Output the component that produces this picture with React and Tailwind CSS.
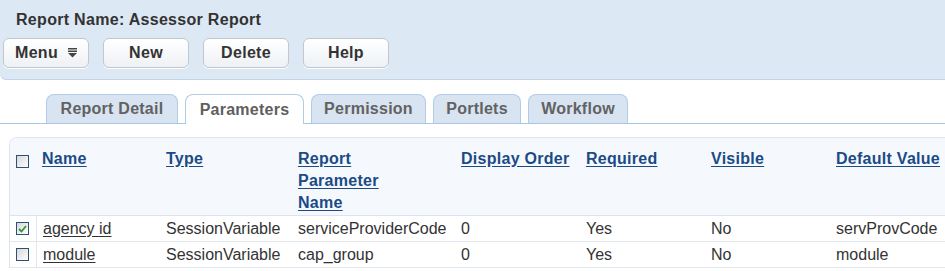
import React from "react";

const tabs = [
    { label: "Report Detail", w: "w-[132px]" },
    { label: "Parameters", w: "w-[119px]", active: true },
    { label: "Permission", w: "w-[115px]" },
    { label: "Portlets", w: "w-[88px]" },
    { label: "Workflow", w: "w-[100px]" },
];

const rows = [
    { name: "agency id", type: "SessionVariable", param: "serviceProviderCode", order: "0", required: "Yes", visible: "No", def: "servProvCode", checked: true },
    { name: "module", type: "SessionVariable", param: "cap_group", order: "0", required: "Yes", visible: "No", def: "module", checked: false },
];

const cols = "grid grid-cols-[26px_124px_132px_163px_125px_125px_125px_1fr]";

function Checkbox({ checked }) {
    return (
        <span className="inline-flex items-center justify-center w-[13px] h-[13px] border border-[#2d4f78] bg-gradient-to-br from-[#d8d8d8] to-white">
            {checked && (
                <svg width="9" height="8" viewBox="0 0 9 8">
                    <path d="M1 4 L3.5 6.5 L8 1" fill="none" stroke="#2f9a2f" strokeWidth="1.8" />
                </svg>
            )}
        </span>
    );
}

function Button({ children }) {
    return (
        <button className="flex items-center justify-center gap-[10px] w-[86px] h-[30px] rounded-[6px] border border-[#c2c7cd] bg-gradient-to-b from-white to-[#eef1f5] text-[16px] tracking-[0.3px] font-bold text-[#333] shadow-[0_1px_0_#ffffff]">
            {children}
        </button>
    );
}

export default function App() {
    return (
        <div className="w-[945px] h-[271px] bg-white overflow-hidden font-['Liberation_Sans',Arial,sans-serif]">
            {/* header panel */}
            <div className="h-[80px] bg-[#dde8f5] border-b border-[#c1d4e8] rounded-bl-[6px]">
                <div className="pl-[16px] pt-[9px] text-[16px] tracking-[0.3px] leading-[22px] font-bold text-[#333]">
                    Report Name: Assessor Report
                </div>
                <div className="flex gap-[14px] pl-[3px] mt-[7px]">
                    <Button>
                        <span>Menu</span>
                        <svg width="9" height="10" viewBox="0 0 9 10">
                            <rect x="0" y="0" width="9" height="1.5" fill="#444" />
                            <rect x="0" y="2.5" width="9" height="1.5" fill="#444" />
                            <path d="M0 5 H9 L4.5 9.5 Z" fill="#444" />
                        </svg>
                    </Button>
                    <Button>New</Button>
                    <Button>Delete</Button>
                    <Button>Help</Button>
                </div>
            </div>

            {/* tabs */}
            <div className="mt-[14px] flex gap-[7px] pl-[46px] border-b border-[#a9c5e2] h-[30px] items-end">
                {tabs.map((t) => (
                    <div
                        key={t.label}
                        className={
                            t.active
                                ? `${t.w} h-[30px] -mb-px flex items-center justify-center rounded-t-[8px] border border-b-0 border-[#b3cce6] bg-white text-[16px] tracking-[0.25px] font-bold text-[#5f5f5f]`
                                : `${t.w} h-[29px] flex items-center justify-center rounded-t-[8px] border border-b-0 border-[#b3cce6] bg-[#d8e4f1] text-[16px] tracking-[0.25px] font-bold text-[#626262]`
                        }
                    >
                        {t.label}
                    </div>
                ))}
            </div>

            {/* parameters table */}
            <div className="mt-[13px] ml-[9px] border-t border-l border-[#dbe5f0] rounded-tl-[8px] overflow-hidden">
                <div className={`${cols} bg-[#f5f9fd] h-[78px] pt-[10px] border-b border-[#dbe4ee] text-[16px] tracking-[0.27px] leading-[22px] font-bold text-[#1b4b86]`}>
                    <div className="pl-[6px] pt-[4px]">
                        <Checkbox />
                    </div>
                    {["Name", "Type", "Report Parameter Name", "Display Order", "Required", "Visible", "Default Value"].map((h) => (
                        <div key={h} className="pl-[6px] pr-[2px]">
                            <span className="underline underline-offset-2">
                                {h === "Report Parameter Name" ? (
                                    <>
                                        Report
                                        <br />
                                        Parameter
                                        <br />
                                        Name
                                    </>
                                ) : (
                                    h
                                )}
                            </span>
                        </div>
                    ))}
                </div>
                {rows.map((r) => (
                    <div key={r.name} className={`${cols} h-[26px] items-center border-b border-[#e2e7ed] text-[16px] text-[#333]`}>
                        <div className="pl-[6px] flex items-center">
                            <Checkbox checked={r.checked} />
                        </div>
                        <div className="pl-[6px] h-full flex items-center border-l border-[#e2e7ed]">
                            <span className="underline underline-offset-2">{r.name}</span>
                        </div>
                        <div className="pl-[6px]">{r.type}</div>
                        <div className="pl-[6px]">{r.param}</div>
                        <div className="pl-[6px]">{r.order}</div>
                        <div className="pl-[6px]">{r.required}</div>
                        <div className="pl-[6px]">{r.visible}</div>
                        <div className="pl-[6px] whitespace-nowrap">{r.def}</div>
                    </div>
                ))}
            </div>
        </div>
    );
}
